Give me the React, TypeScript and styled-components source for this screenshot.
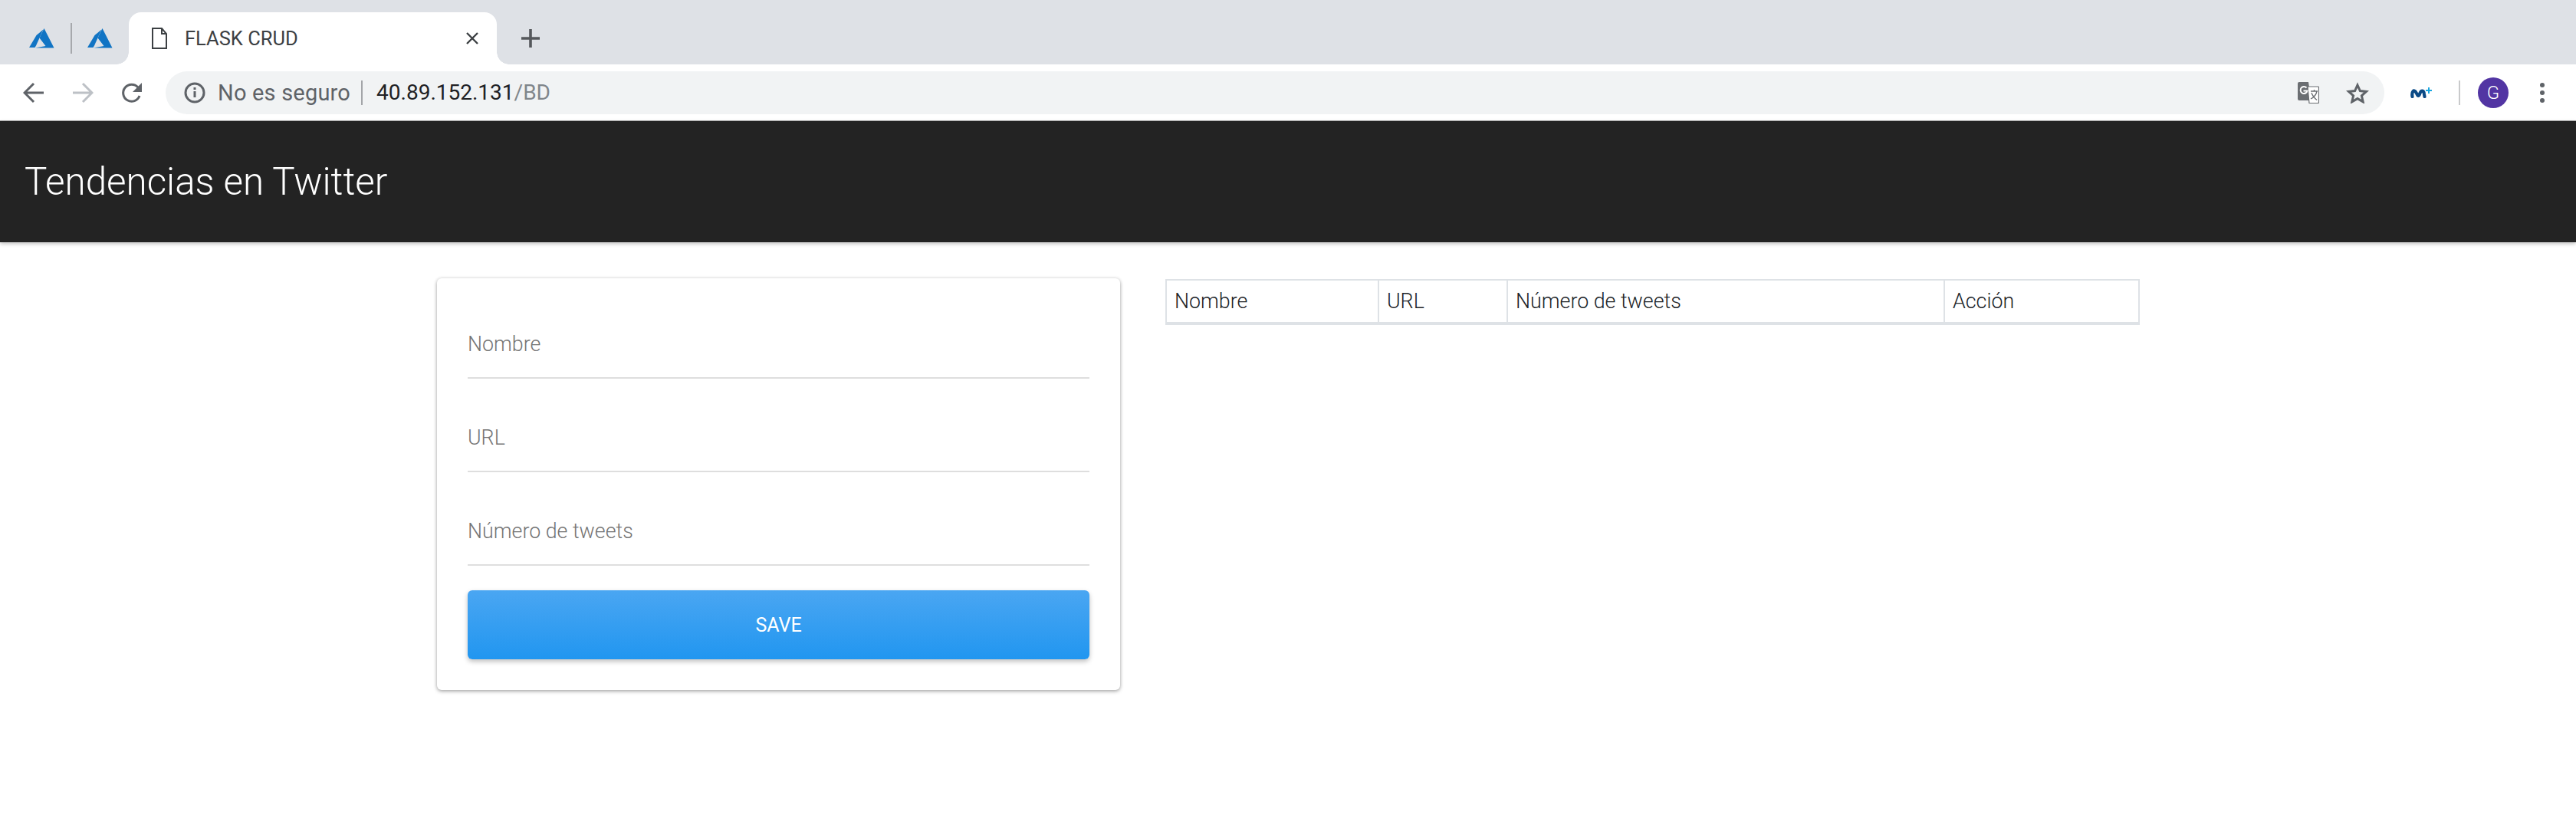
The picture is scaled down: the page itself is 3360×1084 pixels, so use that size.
import { createGlobalStyle } from "styled-components";
import styled from "styled-components";

const GlobalStyle = createGlobalStyle`
  html, body {
    margin: 0;
    padding: 0;
    background: #fff;
    font-family: Roboto, "Liberation Sans", sans-serif;
  }
  * {
    box-sizing: border-box;
  }
`;

const Page = styled.div`
  width: 3360px;
  height: 1084px;
  overflow: hidden;
  background: #fff;
`;

const TabStrip = styled.div`
  height: 84px;
  background: #dee1e6;
  display: flex;
  align-items: flex-end;
  padding-left: 30px;
`;

const PinnedTab = styled.div`
  width: 48px;
  height: 68px;
  display: flex;
  align-items: center;
  justify-content: center;
`;

const TabDivider = styled.div`
  width: 2px;
  height: 40px;
  background: #a6a8ac;
  margin: 0 12px 0 14px;
  align-self: center;
  position: relative;
  top: 8px;
`;

const ActiveTab = styled.div`
  position: relative;
  width: 480px;
  height: 68px;
  margin-left: 14px;
  background: #fff;
  border-radius: 16px 16px 0 0;
  display: flex;
  align-items: center;
  padding: 0 24px 0 30px;
  &::before,
  &::after {
    content: "";
    position: absolute;
    bottom: 0;
    width: 16px;
    height: 16px;
    background: radial-gradient(circle at var(--cx) 0, #dee1e6 15.5px, #fff 16px);
  }
  &::before {
    --cx: 0;
    left: -16px;
  }
  &::after {
    --cx: 100%;
    right: -16px;
  }
`;

const TabTitle = styled.span`
  flex: 1;
  margin-left: 23px;
  font-size: 25.5px;
  color: #3c4043;
`;

const NewTab = styled.div`
  margin-left: 32px;
  height: 68px;
  display: flex;
  align-items: center;
`;

const Toolbar = styled.div`
  height: 74px;
  background: #fff;
  border-bottom: 1px solid #a9a9a9;
  display: flex;
  align-items: center;
  padding-left: 30px;
`;

const NavButton = styled.div`
  width: 28px;
  height: 28px;
  margin-right: 36px;
  display: flex;
  align-items: center;
  justify-content: center;
`;

const Omnibox = styled.div`
  width: 2894px;
  height: 56px;
  margin-left: -6px;
  background: #f1f3f4;
  border-radius: 28px;
  display: flex;
  align-items: center;
  padding: 0 20px 0 24px;
`;

const SecurityText = styled.span`
  margin-left: 16px;
  font-size: 29px;
  letter-spacing: 0.2px;
  color: #5f6368;
`;

const OmniDivider = styled.div`
  width: 2px;
  height: 32px;
  background: #a3a5a8;
  margin: 0 18px 0 14px;
`;

const Host = styled.span`
  font-size: 28px;
  color: #202124;
`;

const UrlPath = styled.span`
  font-size: 28px;
  color: #80868b;
`;

const OmniIcons = styled.div`
  margin-left: auto;
  display: flex;
  align-items: center;
  gap: 35px;
`;

const ToolbarRight = styled.div`
  flex: 1;
  display: flex;
  align-items: center;
  padding-left: 34px;
`;

const ToolbarDivider = styled.div`
  width: 2px;
  height: 32px;
  background: #c9cacb;
  margin: 0 23px 0 35px;
`;

const Avatar = styled.div`
  width: 40px;
  height: 40px;
  border-radius: 50%;
  background: #5235a3;
  color: #fff;
  font-size: 24px;
  font-weight: 300;
  display: flex;
  align-items: center;
  justify-content: center;
`;

const MoreDots = styled.div`
  margin-left: 41px;
  display: flex;
  flex-direction: column;
  gap: 4px;
  span {
    width: 6px;
    height: 6px;
    border-radius: 50%;
    background: #5f6368;
  }
`;

const AppBar = styled.header`
  height: 158px;
  background: #232323;
  box-shadow: 0 2px 5px rgba(0, 0, 0, 0.26);
  display: flex;
  align-items: center;
  padding-left: 32px;
`;

const AppTitle = styled.h1`
  margin: 0;
  font-size: 49.3px;
  font-weight: 300;
  color: #fff;
`;

const Content = styled.main`
  display: flex;
  align-items: flex-start;
  gap: 59px;
  padding: 47px 0 0 570px;
`;

const Card = styled.form`
  width: 891px;
  height: 537px;
  padding: 9px 40px 0;
  background: #fff;
  border-radius: 6px;
  box-shadow: 0 2px 5px rgba(0, 0, 0, 0.3), 0 0 4px rgba(0, 0, 0, 0.12);
`;

const Field = styled.div`
  height: 122px;
  display: flex;
  align-items: flex-end;
  padding-bottom: 27px;
  border-bottom: 2px solid #dedede;
  font-size: 26.8px;
  font-weight: 300;
  color: #757575;
`;

const SaveButton = styled.button`
  width: 100%;
  height: 90px;
  margin-top: 32px;
  border: none;
  border-radius: 6px;
  background: linear-gradient(180deg, #4aa6f2, #2196f0);
  box-shadow: 0 3px 6px rgba(0, 0, 0, 0.25);
  color: #fff;
  font-family: inherit;
  font-size: 25px;
  font-weight: 400;
`;

const TrendsTable = styled.table`
  width: 1269px;
  height: 60px;
  margin-top: 1px;
  border-collapse: collapse;
  table-layout: fixed;
  border-top: 2px solid #dee2e6;
  border-bottom: 4px solid #dee2e6;
`;

const HeadCell = styled.th<{ $width: number }>`
  width: ${(props) => props.$width}px;
  padding: 0 0 0 10px;
  border-left: 2px solid #dee2e6;
  border-right: 2px solid #dee2e6;
  text-align: left;
  font-size: 26.8px;
  font-weight: 300;
  color: #212529;
`;

const Azure = () => (
  <svg width="33" height="26" viewBox="0 0 33 26">
    <path fill="#1174c4" d="M19.500 0 32.500 25.500H8L21.500 23 13.500 12.500Z" />
    <path fill="#1174c4" d="M18.500 1.500 9.500 9 0 25H7.500L9 22.500Z" />
  </svg>
);

const columns = [
  { name: "Nombre", width: 277 },
  { name: "URL", width: 168 },
  { name: "Número de tweets", width: 570 },
  { name: "Acción", width: 254 },
];

function App() {
  return (
    <Page>
      <GlobalStyle />
      <TabStrip>
        <PinnedTab>
          <Azure />
        </PinnedTab>
        <TabDivider />
        <PinnedTab>
          <Azure />
        </PinnedTab>
        <ActiveTab>
          <svg width="20" height="28" viewBox="0 0 20 28" fill="none" stroke="#3c4043" strokeWidth="2">
            <path d="M1 1h12l6 7v19H1z" />
            <path d="M13 1v7h6" />
          </svg>
          <TabTitle>FLASK CRUD</TabTitle>
          <svg width="16" height="16" viewBox="0 0 16 16" stroke="#3c4043" strokeWidth="2.4">
            <path d="M1 1l14 14M15 1L1 15" />
          </svg>
        </ActiveTab>
        <NewTab>
          <svg width="24" height="24" viewBox="0 0 24 24" stroke="#55585c" strokeWidth="3.600">
            <path d="M12 0v24M0 12h24" />
          </svg>
        </NewTab>
      </TabStrip>
      <Toolbar>
        <NavButton>
          <svg width="28" height="28" viewBox="0 0 28 28" fill="none" stroke="#5f6368" strokeWidth="3">
            <path d="M27 14H3M14 2 2 14l12 12" />
          </svg>
        </NavButton>
        <NavButton>
          <svg width="28" height="28" viewBox="0 0 28 28" fill="none" stroke="#bdc1c6" strokeWidth="3">
            <path d="M1 14h24M14 2l12 12-12 12" />
          </svg>
        </NavButton>
        <NavButton>
          <svg width="28" height="28" viewBox="0 0 28 28">
            <path d="M24 18a11 11 0 1 1-2-11" fill="none" stroke="#5f6368" strokeWidth="3" />
            <path d="M27 1v12H15z" fill="#5f6368" />
          </svg>
        </NavButton>
        <Omnibox>
          <svg width="28" height="28" viewBox="0 0 28 28" fill="none" stroke="#5f6368" strokeWidth="3">
            <circle cx="14" cy="14" r="12" />
            <path d="M14 12v8M14 7v3" />
          </svg>
          <SecurityText>No es seguro</SecurityText>
          <OmniDivider />
          <Host>40.89.152.131</Host>
          <UrlPath>/BD</UrlPath>
          <OmniIcons>
            <svg width="28" height="28" viewBox="0 0 28 28">
              <path d="M0 2a2 2 0 0 1 2-2h12l3.500 24H2a2 2 0 0 1-2-2z" fill="#6b6e72" />
              <path d="M13 6h13.500a1 1 0 0 1 1 1v19.500a1 1 0 0 1-1 1H15z" fill="#fff" stroke="#6b6e72" strokeWidth="1.200" />
              <path d="M17 12h9M21.500 10v2M25 12c-1 5-4 8-8 10M18 14c1 3 4 7 7 9.500" fill="none" stroke="#6b6e72" strokeWidth="1.300" />
              <path d="M11.500 7.500a4.500 4.500 0 1 0 1 4H7.500" fill="none" stroke="#fff" strokeWidth="2" />
            </svg>
            <svg width="30" height="28" viewBox="0 0 30 28" fill="none" stroke="#5f6368" strokeWidth="3">
              <path d="M15 4l3.400 7.600 8.100.8-6.100 5.400 1.800 8L15 21.600l-7.200 4.200 1.800-8-6.100-5.400 8.100-.8z" />
            </svg>
          </OmniIcons>
        </Omnibox>
        <ToolbarRight>
          <svg width="28" height="14" viewBox="0 0 28 14">
            <path d="M2.500 12C1.500 5 4.500 2.500 7 6l2.500 4.500c1 1 2 0 3-3 1.500-4 5-4.500 5.500 1.500l.5 3" fill="none" stroke="#0b4a86" strokeWidth="4.200" strokeLinecap="round" />
            <path d="M20 4h8M24 0v8" stroke="#19a7e0" strokeWidth="2" />
          </svg>
          <ToolbarDivider />
          <Avatar>G</Avatar>
          <MoreDots>
            <span />
            <span />
            <span />
          </MoreDots>
        </ToolbarRight>
      </Toolbar>
      <AppBar>
        <AppTitle>Tendencias en Twitter</AppTitle>
      </AppBar>
      <Content>
        <Card>
          <Field>Nombre</Field>
          <Field>URL</Field>
          <Field>Número de tweets</Field>
          <SaveButton type="button">SAVE</SaveButton>
        </Card>
        <TrendsTable>
          <thead>
            <tr>
              {columns.map((column) => (
                <HeadCell key={column.name} $width={column.width}>
                  {column.name}
                </HeadCell>
              ))}
            </tr>
          </thead>
        </TrendsTable>
      </Content>
    </Page>
  );
}

export default App;
